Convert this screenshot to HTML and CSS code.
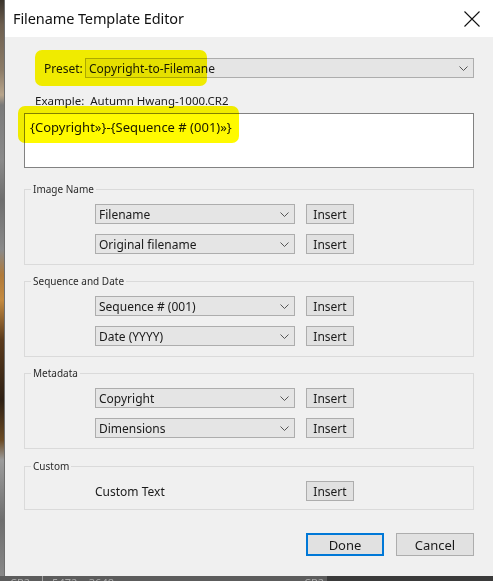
FILE: index.html
```html
<!DOCTYPE html>
<html lang="en">
<head>
<meta charset="utf-8">
<title>Filename Template Editor</title>
<link rel="stylesheet" href="styles.css">
</head>
<body>
<div class="screen">
  <div class="backdrop-left"></div>
  <div class="dialog">
    <div class="titlebar">
      <span class="title">Filename Template Editor</span>
      <svg class="close" width="16" height="16" viewBox="0 0 16 16"><path d="M0.5 0.5 L15.5 15.5 M15.5 0.5 L0.5 15.5" stroke="#111" stroke-width="1.1" fill="none"/></svg>
    </div>
    <div class="content">
      <div class="preset-row">
        <span class="label">Preset:</span>
        <div class="select select-wide"><span>Copyright-to-Filemane</span><svg class="chev" width="9" height="5" viewBox="0 0 9 5"><path d="M0.5 0.5 L4.5 4.5 L8.5 0.5" stroke="#555" fill="none"/></svg></div>
      </div>
      <div class="example">Example:&nbsp; Autumn Hwang-1000.CR2</div>
      <div class="template-box">{Copyright»}-{Sequence # (001)»}</div>

      <fieldset class="group">
        <legend>Image Name</legend>
        <div class="rows">
          <div class="row"><div class="select"><span>Filename</span><svg class="chev" width="9" height="5" viewBox="0 0 9 5"><path d="M0.5 0.5 L4.5 4.5 L8.5 0.5" stroke="#555" fill="none"/></svg></div><button class="insert">Insert</button></div>
          <div class="row"><div class="select"><span>Original filename</span><svg class="chev" width="9" height="5" viewBox="0 0 9 5"><path d="M0.5 0.5 L4.5 4.5 L8.5 0.5" stroke="#555" fill="none"/></svg></div><button class="insert">Insert</button></div>
        </div>
      </fieldset>

      <fieldset class="group">
        <legend>Sequence and Date</legend>
        <div class="rows">
          <div class="row"><div class="select"><span>Sequence # (001)</span><svg class="chev" width="9" height="5" viewBox="0 0 9 5"><path d="M0.5 0.5 L4.5 4.5 L8.5 0.5" stroke="#555" fill="none"/></svg></div><button class="insert">Insert</button></div>
          <div class="row"><div class="select"><span>Date (YYYY)</span><svg class="chev" width="9" height="5" viewBox="0 0 9 5"><path d="M0.5 0.5 L4.5 4.5 L8.5 0.5" stroke="#555" fill="none"/></svg></div><button class="insert">Insert</button></div>
        </div>
      </fieldset>

      <fieldset class="group">
        <legend>Metadata</legend>
        <div class="rows">
          <div class="row"><div class="select"><span>Copyright</span><svg class="chev" width="9" height="5" viewBox="0 0 9 5"><path d="M0.5 0.5 L4.5 4.5 L8.5 0.5" stroke="#555" fill="none"/></svg></div><button class="insert">Insert</button></div>
          <div class="row"><div class="select"><span>Dimensions</span><svg class="chev" width="9" height="5" viewBox="0 0 9 5"><path d="M0.5 0.5 L4.5 4.5 L8.5 0.5" stroke="#555" fill="none"/></svg></div><button class="insert">Insert</button></div>
        </div>
      </fieldset>

      <fieldset class="group group-custom">
        <legend>Custom</legend>
        <div class="rows rows-custom">
          <div class="row"><div class="plain">Custom Text</div><button class="insert">Insert</button></div>
        </div>
      </fieldset>

      <div class="actions">
        <button class="btn btn-default">Done</button>
        <button class="btn">Cancel</button>
      </div>
    </div>
    <div class="highlight hl-preset"></div>
    <div class="highlight hl-template"></div>
  </div>
  <div class="statusbar">
    <span class="st-a">CR2</span><span class="st-sep"></span><span class="st-b">5472 x 3648</span><span class="st-c">CR2</span>
  </div>
</div>
</body>
</html>
```
FILE: styles.css
```css
* { box-sizing: border-box; }
html, body { margin: 0; padding: 0; }
body {
  width: 493px;
  height: 581px;
  overflow: hidden;
  font-family: "Noto Sans", "Open Sans", sans-serif;
  font-size: 12px;
  color: #1a1a1a;
  background: #3a3a3a;
}
.screen {
  display: grid;
  grid-template-columns: 4px 489px;
  grid-template-rows: 576px 5px;
  width: 493px;
  height: 581px;
}
.backdrop-left {
  background: linear-gradient(to bottom,
    #3b342c 0px, #6d5f50 25px, #8c7c68 70px, #b8a58c 95px,
    #7a7a7a 105px, #8a8a8a 160px, #6e6e6e 200px, #8a8a8a 250px,
    #b07a3a 275px, #c48a40 300px, #5a3a1c 340px, #2e2014 400px,
    #6a4a24 440px, #9c9c9c 460px, #6e6e6e 520px, #888 576px);
}
.dialog {
  position: relative;
  background: #f0f0f0;
  border-left: 1px solid #6f6f6f;
  display: flex;
  flex-direction: column;
}
.titlebar {
  height: 37px;
  background: #ffffff;
  display: flex;
  align-items: center;
  justify-content: space-between;
  padding: 0 13px 0 8px;
  flex: none;
}
.title {
  font-size: 14.5px;
  letter-spacing: -0.1px;
  color: #111;
  margin-top: -1px;
}
.close { display: block; margin-top: 1px; }

.content {
  padding: 21px 19px 0 19px;
  display: flex;
  flex-direction: column;
}
.preset-row {
  display: flex;
  align-items: center;
  height: 20px;
  padding-left: 20px;
}
.label { width: 41px; flex: none; }
.select {
  height: 20px;
  background: #e5e5e5;
  border: 1px solid #adadad;
  display: flex;
  align-items: center;
  justify-content: space-between;
  padding: 0 5px 0 3px;
  width: 200px;
  flex: none;
}
.select-wide { flex: 1; width: auto; }
.chev { display: block; }

.example {
  margin-top: 15px;
  height: 16px;
  line-height: 16px;
  padding-left: 11px;
  font-size: 11.5px;
}
.template-box {
  margin-top: 4px;
  height: 55px;
  background: #ffffff;
  border: 1px solid #828282;
  padding: 4px 5px;
  font-size: 13px;
  line-height: 18px;
  color: #1a1a1a;
}

.group {
  margin: 14px 0 0 0;
  padding: 0;
  border: 1px solid #dadada;
  min-width: 0;
}
.group + .group { margin-top: 9px; }
.group.group-custom { margin-top: 10px; }
.group legend {
  margin-left: 6px;
  padding: 0 2px;
  font-size: 10px;
  line-height: 14px;
  color: #2a2a2a;
}
.rows {
  display: flex;
  flex-direction: column;
  gap: 10px;
  padding: 8px 0 10px 70px;
}
.rows-custom { padding: 8px 0 8px 70px; }
.row {
  display: flex;
  align-items: center;
  gap: 11px;
  height: 20px;
}
.plain { width: 200px; padding-left: 0; font-size: 12px; }
button {
  font-family: inherit;
  font-size: 12px;
  color: #1a1a1a;
  margin: 0;
  padding: 0;
}
.insert {
  width: 48px;
  height: 20px;
  background: #e1e1e1;
  border: 1px solid #adadad;
}
.actions {
  display: flex;
  justify-content: flex-end;
  gap: 12px;
  margin-top: 23px;
}
.btn {
  width: 78px;
  height: 23px;
  background: #e1e1e1;
  border: 1px solid #adadad;
  font-size: 13px;
}
.btn-default {
  border: 2px solid #0078d7;
}

.highlight {
  position: absolute;
  background: #fffa00;
  mix-blend-mode: multiply;
  border-radius: 7px;
}
.hl-preset { left: 30px; top: 50px; width: 172px; height: 36px; }
.hl-template { left: 13px; top: 106px; width: 221px; height: 37px; }

.statusbar {
  grid-column: 1 / 3;
  background: linear-gradient(to right, #5c5c5c 0, #5c5c5c 327px, #3a3a3a 327px);
  overflow: hidden;
  display: flex;
  align-items: flex-start;
  font-size: 11px;
  line-height: 11px;
  color: #a8a8a8;
}
.st-a { margin-left: 10px; margin-top: 1px; }
.st-sep { width: 1px; height: 5px; background: #a0a0a0; margin-left: 12px; }
.st-b { margin-left: 9px; margin-top: 1px; }
.st-c { margin-left: 190px; margin-top: 1px; }
```
